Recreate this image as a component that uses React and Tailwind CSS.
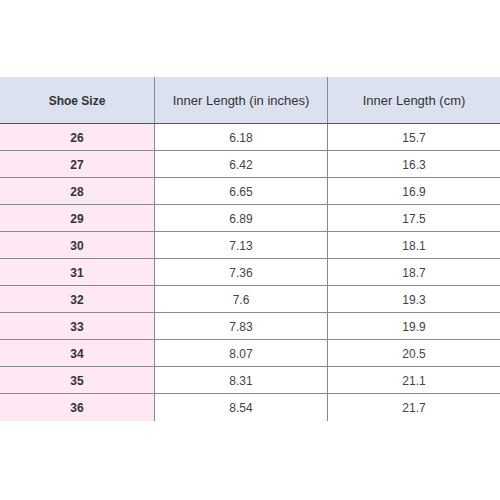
import React from "react";

const rows = [
  ["26", "6.18", "15.7"],
  ["27", "6.42", "16.3"],
  ["28", "6.65", "16.9"],
  ["29", "6.89", "17.5"],
  ["30", "7.13", "18.1"],
  ["31", "7.36", "18.7"],
  ["32", "7.6", "19.3"],
  ["33", "7.83", "19.9"],
  ["34", "8.07", "20.5"],
  ["35", "8.31", "21.1"],
  ["36", "8.54", "21.7"],
];

export default function App() {
  return (
    <div className="w-[500px] h-[500px] bg-white pt-[77px]" style={{ fontFamily: '"Liberation Sans", Arial, sans-serif' }}>
      <div className="grid grid-cols-[155px_173px_172px] h-[47px] bg-[#dbe1ef] border-b border-[#555] text-[#333]">
        <div className="flex items-center justify-center pt-[2px] text-[12px] font-bold border-r border-[#8a8a8a]">Shoe Size</div>
        <div className="flex items-center justify-center pt-[2px] text-[13px] border-r border-[#8a8a8a]">Inner Length (in inches)</div>
        <div className="flex items-center justify-center pt-[2px] text-[13px]">Inner Length (cm)</div>
      </div>
      {rows.map((r, i) => (
        <div key={i} className={`grid grid-cols-[155px_173px_172px] h-[27px] text-[12px] text-[#444] ${i < rows.length - 1 ? "border-b border-[#8a8a8a]" : ""}`}>
          <div className="flex items-center justify-center pt-[1px] bg-[#fde8f4] font-bold text-[#333] border-r border-[#8a8a8a]">{r[0]}</div>
          <div className="flex items-center justify-center pt-[1px] border-r border-[#8a8a8a]">{r[1]}</div>
          <div className="flex items-center justify-center pt-[1px]">{r[2]}</div>
        </div>
      ))}
    </div>
  );
}
